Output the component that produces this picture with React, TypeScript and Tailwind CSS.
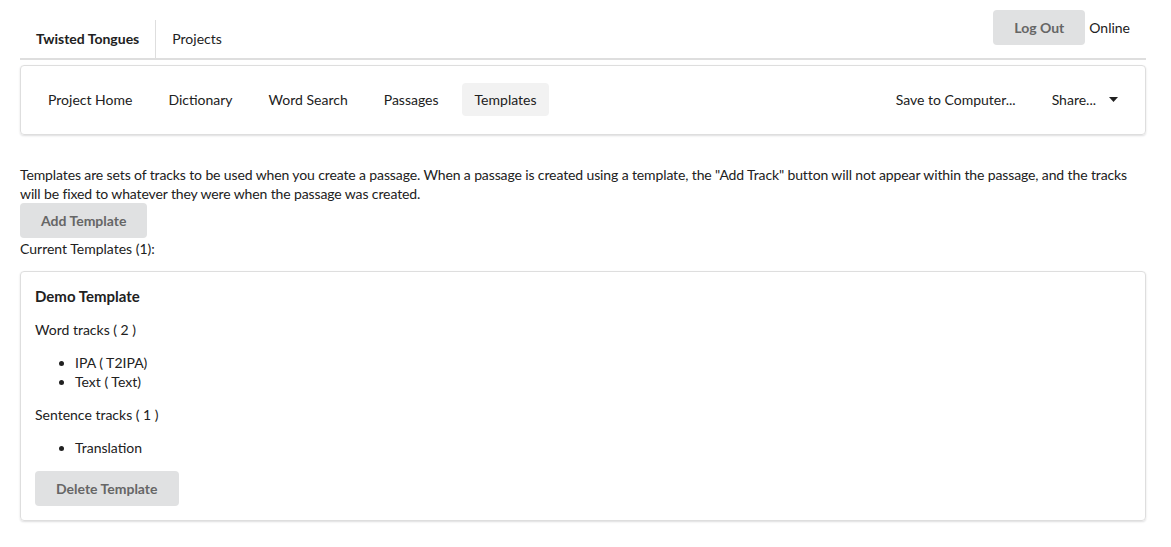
import React from 'react';

const font = { fontFamily: 'Lato, "Noto Sans", "Liberation Sans", sans-serif' };

function GreyButton({ children }: { children: React.ReactNode }) {
  return (
    <button className="h-[35px] px-[21px] rounded-[4px] bg-[#e0e1e2] text-[#666666] font-bold text-[14px] leading-[14px]">
      {children}
    </button>
  );
}

export default function App() {
  const navItems = ['Project Home', 'Dictionary', 'Word Search', 'Passages', 'Templates'];

  return (
    <div className="min-h-screen bg-white text-[14px] text-[#212121] pt-[10px] pl-[20px] pr-[25px]" style={font}>
      {/* top menu */}
      <div className="flex h-[50px] border-b-2 border-[#dedede]">
        <div className="flex self-end">
          <div className="px-[16px] py-[12px] leading-[14px] font-bold border-r border-[#dedede]">Twisted Tongues</div>
          <div className="px-[16px] py-[12px] leading-[14px]">Projects</div>
        </div>
        <div className="ml-auto flex items-center self-start pr-[16px]">
          <GreyButton>Log Out</GreyButton>
          <span className="ml-[4px] leading-[14px]">Online</span>
        </div>
      </div>

      {/* project menu */}
      <div className="mt-[5px] border border-[#dedede] rounded-[4px] shadow-[0_1px_2px_0_rgba(34,36,38,0.15)] px-[14px] pt-[17px] pb-[18px]">
        <div className="flex gap-[10px]">
          {navItems.map((item) => (
            <div
              key={item}
              className={
                item === 'Templates'
                  ? 'px-[13px] h-[33px] flex items-center rounded-[4px] bg-[#f2f2f2]'
                  : 'px-[13px] h-[33px] flex items-center'
              }
            >
              {item}
            </div>
          ))}
          <div className="ml-auto px-[13px] h-[33px] flex items-center">Save to Computer...</div>
          <div className="px-[13px] h-[33px] flex items-center">
            Share...
            <svg className="ml-[13px]" width="9" height="5" viewBox="0 0 9 5">
              <path d="M0 0 L9 0 L4.5 5 Z" fill="#212121" />
            </svg>
          </div>
        </div>
      </div>

      {/* description */}
      <p className="mt-[30px] leading-[19px] tracking-[-0.12px]">
        Templates are sets of tracks to be used when you create a passage. When a passage is created using a template, the "Add Track" button will not appear within the passage, and the tracks will be fixed to whatever they were when the passage was created.
      </p>
      <GreyButton>Add Template</GreyButton>
      <div className="leading-[20px] mt-[1px]">Current Templates (1):</div>

      {/* template card */}
      <div className="mt-[12px] border border-[#dedede] rounded-[4px] shadow-[0_1px_2px_0_rgba(34,36,38,0.15)] p-[14px]">
        <div className="font-bold text-[15px] leading-[20px]">Demo Template</div>
        <p className="mt-[14px] leading-[20px]">Word tracks ( 2 )</p>
        <ul className="mt-[13px] list-disc pl-[40px] leading-[19px]">
          <li>IPA ( T2IPA)</li>
          <li>Text ( Text)</li>
        </ul>
        <p className="mt-[14px] leading-[20px]">Sentence tracks ( 1 )</p>
        <ul className="mt-[13px] list-disc pl-[40px] leading-[20px]">
          <li>Translation</li>
        </ul>
        <div className="mt-[13px]">
          <GreyButton>Delete Template</GreyButton>
        </div>
      </div>
    </div>
  );
}
